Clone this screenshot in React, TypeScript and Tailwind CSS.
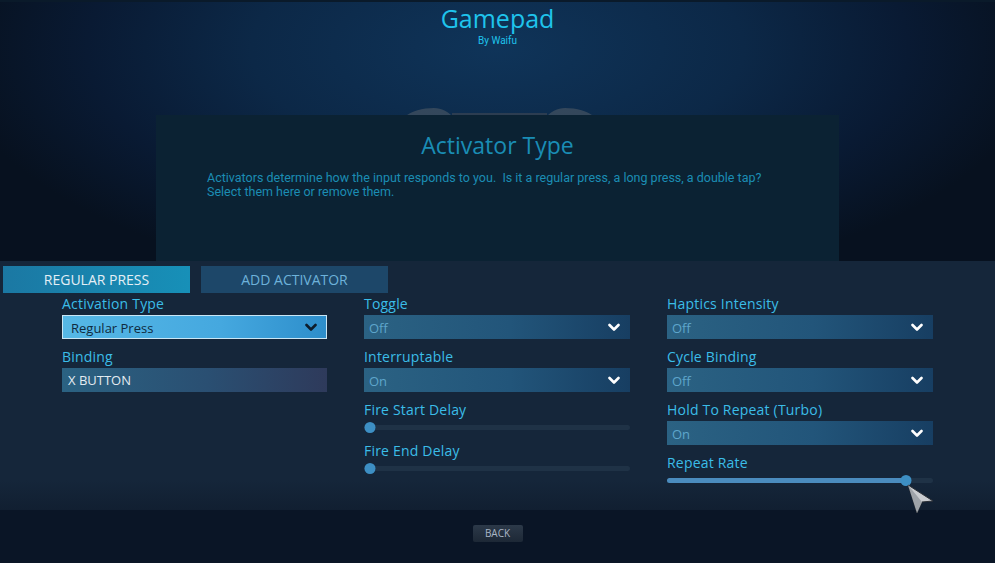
import React from 'react';

const LABEL = 'text-[14px] leading-[22px] text-[#3bbde8] tracking-[0.2px]';

const Chevron = ({ color = '#ffffff' }: { color?: string }) => (
  <svg width="12" height="9" viewBox="0 0 12 9">
    <path d="M1.5 2 L6 6.5 L10.5 2" fill="none" stroke={color} strokeWidth="2.6" strokeLinecap="round" strokeLinejoin="round" />
  </svg>
);

const Dropdown = ({ label, value }: { label: string; value: string }) => (
  <div className="mb-[7px]">
    <div className={LABEL}>{label}</div>
    <div className="h-[24px] flex items-center justify-between pl-[5px] pr-[10px] bg-[linear-gradient(90deg,#2b6283_0%,#22557a_55%,#173e62_100%)]">
      <span className="pt-[3px] text-[13px] text-[#5ea6cb]">{value}</span>
      <Chevron />
    </div>
  </div>
);

const Slider = ({ label, pct }: { label: string; pct: number }) => (
  <div className="mb-[7px]">
    <div className={LABEL}>{label}</div>
    <div className="relative h-[12px] flex items-center">
      <div className="w-full h-[5px] rounded-full bg-[#1f3246]" />
      {pct > 0 && (
        <div className="absolute left-0 h-[5px] rounded-full bg-[#4b8cbe]" style={{ width: `${pct}%` }} />
      )}
      <div
        className="absolute w-[11px] h-[11px] rounded-full bg-[#3d8fc4] -translate-x-1/2"
        style={{ left: `calc(${pct}% + ${pct === 0 ? 6 : 0}px)` }}
      />
    </div>
  </div>
);

const App = () => {
  return (
    <div
      className="relative w-[995px] h-[563px] overflow-hidden flex flex-col bg-[#08142a]"
      style={{ fontFamily: '"Open Sans", "Noto Sans", sans-serif' }}
    >
      {/* top stage */}
      <div className="relative h-[261px] flex flex-col items-center border-t-2 border-[#0a1a2a] bg-[radial-gradient(ellipse_55%_95%_at_50%_18%,#0f3459_0%,#0c2847_45%,#091a33_75%,#07111f_100%)]">
        <div className="text-[25px] leading-[32px] text-[#1fc3ec]">Gamepad</div>
        <div className="mt-[1px] text-[10px] leading-[12px] text-[#1fc3ec]" style={{ fontFamily: 'Roboto, sans-serif' }}>By Waifu</div>

        {/* controller peeking out behind the panel */}
        <svg className="absolute left-[402px] top-[104px]" width="195" height="12" viewBox="0 0 195 12">
          <path d="M2 11 C10 5 20 2 32 2 C40 2 46 6 50 10 L145 10 C149 6 155 2 163 2 C175 2 185 5 193 11 Z" fill="#4f5a66" opacity="0.6" />
          <rect x="50" y="7" width="95" height="4" fill="#3a4552" opacity="0.7" />
        </svg>

        <div className="relative mt-[68px] w-[683px] flex-1 bg-[#0b2233] flex flex-col">
          <div className="mt-[15px] text-center text-[23px] leading-[30px] text-[#1a8db5]">Activator Type</div>
          <div
            className="mt-[11px] pl-[51px] text-[12.5px] leading-[14px] text-[#1b8db3]"
            style={{ fontFamily: 'Roboto, sans-serif' }}
          >
            <div>Activators determine how the input responds to you.&nbsp; Is it a regular press, a long press, a double tap?</div>
            <div>Select them here or remove them.</div>
          </div>
        </div>
      </div>

      {/* settings area */}
      <div className="h-[249px] bg-[linear-gradient(180deg,#15263a_0%,#15263a_88%,#111f31_100%)] pt-[5px]">
        <div className="flex gap-[11px] pl-[3px]">
          <div className="w-[187px] h-[27px] flex items-center justify-center text-[14px] text-[#e4eff6] bg-[linear-gradient(90deg,#1b78a3_0%,#1790b8_100%)]">
            REGULAR PRESS
          </div>
          <div className="w-[187px] h-[27px] flex items-center justify-center text-[14px] text-[#6db2da] bg-[#1d4769]">
            ADD ACTIVATOR
          </div>
        </div>

        <div className="flex gap-[37px] pl-[62px]">
          <div className="w-[265px]">
            <div className="mb-[7px]">
              <div className={LABEL}>Activation Type</div>
              <div className="h-[24px] flex items-center justify-between pl-[8px] pr-[9px] border border-[#c9e6f5] bg-[linear-gradient(90deg,#56b8e6_0%,#45a8df_60%,#2d8ecb_100%)]">
                <span className="pt-[3px] text-[13px] text-[#0f2a3e]">Regular Press</span>
                <Chevron color="#0d1d2c" />
              </div>
            </div>
            <div className="mb-[7px]">
              <div className={LABEL}>Binding</div>
              <div className="h-[24px] flex items-center pl-[6px] bg-[linear-gradient(90deg,#2b6282_0%,#2a4f72_55%,#2e3a5b_100%)]">
                <span className="pt-[2px] text-[13px] text-[#e3ebf1]">X BUTTON</span>
              </div>
            </div>
          </div>

          <div className="w-[266px]">
            <Dropdown label="Toggle" value="Off" />
            <Dropdown label="Interruptable" value="On" />
            <Slider label="Fire Start Delay" pct={0} />
            <Slider label="Fire End Delay" pct={0} />
          </div>

          <div className="w-[266px]">
            <Dropdown label="Haptics Intensity" value="Off" />
            <Dropdown label="Cycle Binding" value="Off" />
            <Dropdown label="Hold To Repeat (Turbo)" value="On" />
            <Slider label="Repeat Rate" pct={90} />
          </div>
        </div>
      </div>

      {/* footer */}
      <div className="flex-1 bg-[#0a1526] flex justify-center pt-[15px]">
        <div className="w-[50px] h-[17px] rounded-[2px] flex items-center justify-center text-[10px] text-[#a9b6c5] bg-[linear-gradient(180deg,#2c3949_0%,#1d2836_100%)]">
          BACK
        </div>
      </div>

      {/* mouse pointer */}
      <svg className="absolute left-[906px] top-[483px]" width="30" height="32" viewBox="0 0 30 32">
        <path d="M2 2 L27 18 L16 19 L11 30 Z" fill="#c9ccd0" stroke="#2a2f36" strokeWidth="1" strokeLinejoin="round" />
        <path d="M2 2 L16 19 L11 30 Z" fill="#9ea3a9" />
      </svg>
    </div>
  );
};

export default App;
